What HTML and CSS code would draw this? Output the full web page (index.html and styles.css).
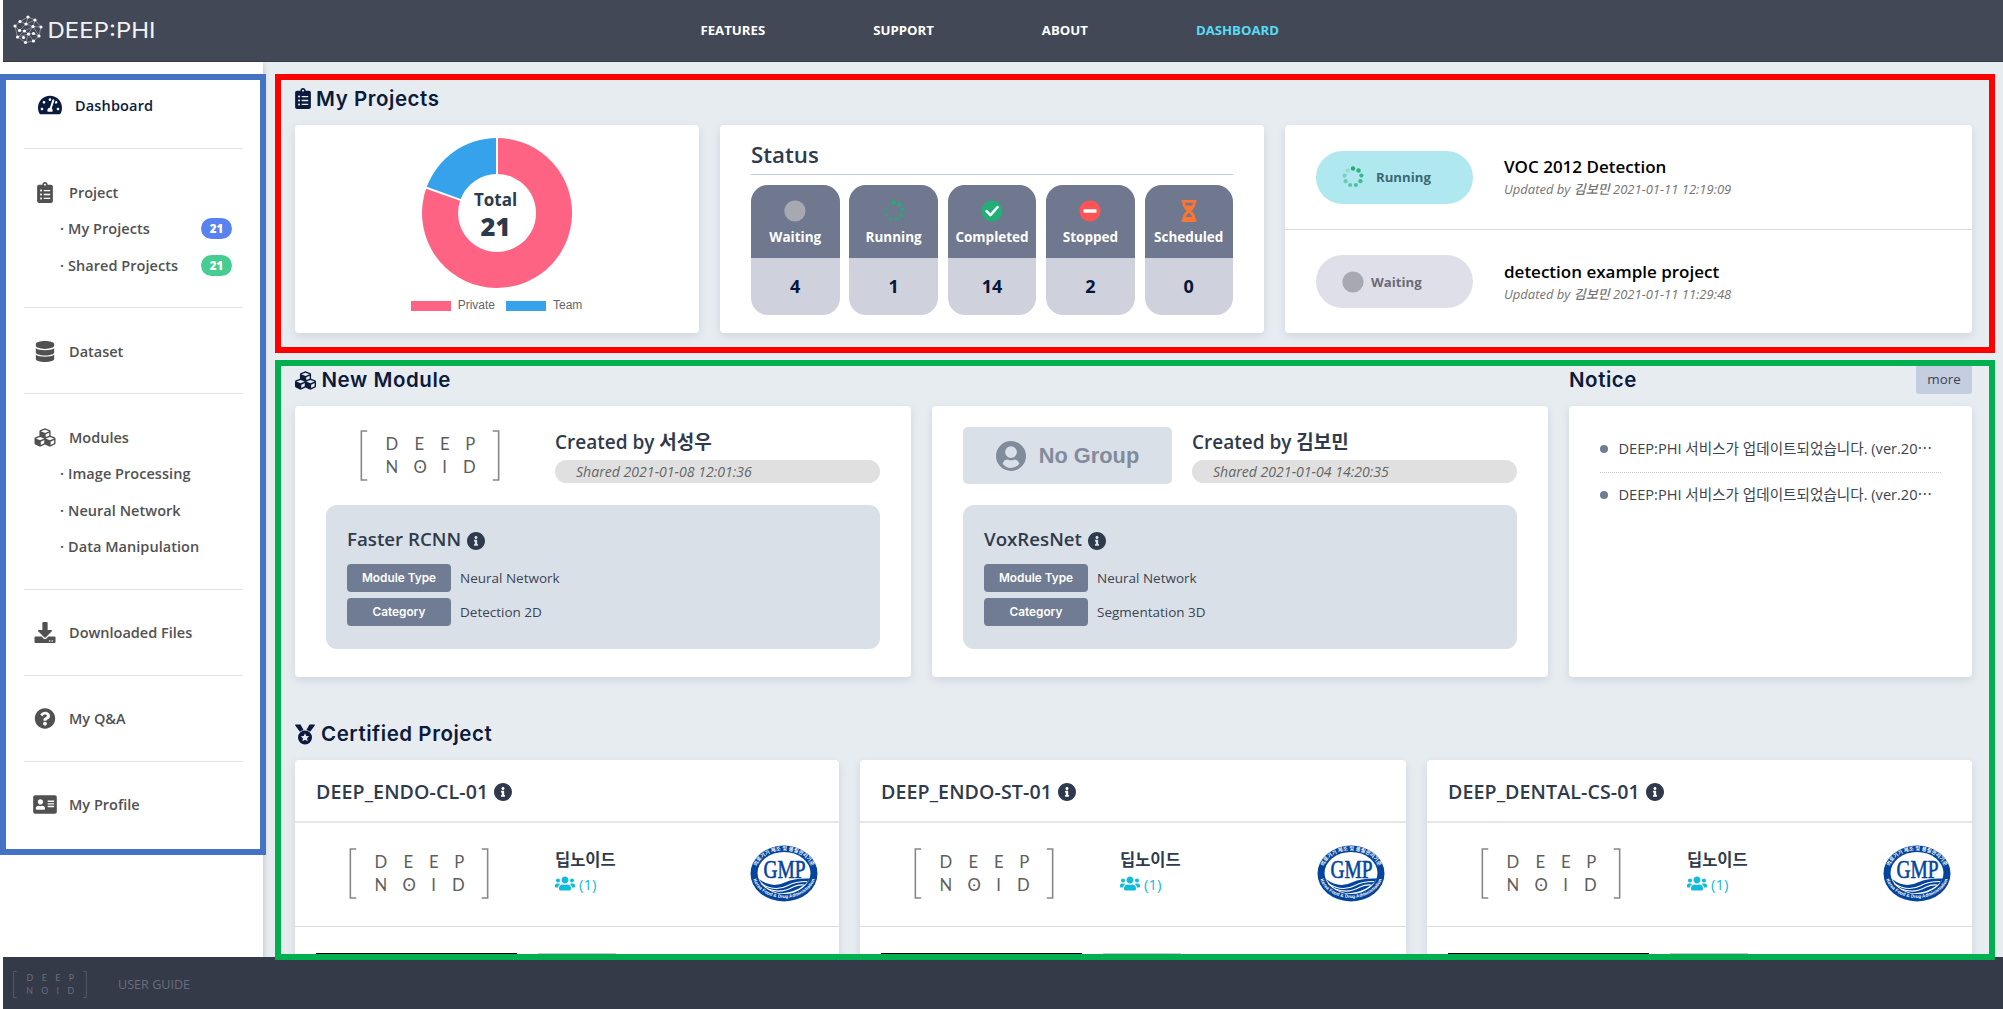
FILE: index.html
```
<!DOCTYPE html>
<html lang="ko">
<head>
<meta charset="utf-8">
<title>DEEP:PHI Dashboard</title>
<link rel="stylesheet" href="styles.css">
</head>
<body>
<svg class="sprite" aria-hidden="true">
  <symbol id="i-clip" viewBox="0 0 384 512"><path d="M336 64h-80c0-35.300-28.700-64-64-64s-64 28.700-64 64H48C21.500 64 0 85.500 0 112v352c0 26.500 21.500 48 48 48h288c26.500 0 48-21.500 48-48V112c0-26.500-21.500-48-48-48zM96 424c-13.300 0-24-10.700-24-24s10.700-24 24-24 24 10.700 24 24-10.700 24-24 24zm0-96c-13.300 0-24-10.700-24-24s10.700-24 24-24 24 10.700 24 24-10.700 24-24 24zm0-96c-13.300 0-24-10.700-24-24s10.700-24 24-24 24 10.700 24 24-10.700 24-24 24zm96-192c13.300 0 24 10.700 24 24s-10.700 24-24 24-24-10.700-24-24 10.700-24 24-24zm128 368c0 4.400-3.600 8-8 8H168c-4.400 0-8-3.600-8-8v-16c0-4.400 3.600-8 8-8h144c4.400 0 8 3.600 8 8v16zm0-96c0 4.400-3.600 8-8 8H168c-4.400 0-8-3.600-8-8v-16c0-4.400 3.600-8 8-8h144c4.400 0 8 3.600 8 8v16zm0-96c0 4.400-3.600 8-8 8H168c-4.400 0-8-3.600-8-8v-16c0-4.400 3.600-8 8-8h144c4.400 0 8 3.600 8 8v16z"/></symbol>
  <symbol id="i-dash" viewBox="0 0 576 512"><path d="M288 32C128.940 32 0 160.940 0 320c0 52.800 14.250 102.260 39.060 144.800 5.610 9.620 16.300 15.200 27.440 15.200h443c11.140 0 21.830-5.580 27.440-15.200C561.750 422.260 576 372.800 576 320c0-159.060-128.940-288-288-288zm0 64c14.710 0 26.580 10.130 30.320 23.650-1.110 2.260-2.640 4.230-3.450 6.670l-9.220 27.670c-5.130 3.490-10.970 6.010-17.640 6.010-17.670 0-32-14.330-32-32S270.330 96 288 96zM96 384c-17.670 0-32-14.330-32-32s14.330-32 32-32 32 14.330 32 32-14.330 32-32 32zm48-160c-17.670 0-32-14.330-32-32s14.330-32 32-32 32 14.330 32 32-14.330 32-32 32zm246.770-72.410l-61.330 184C343.130 347.330 352 364.540 352 384c0 11.720-3.380 22.550-8.880 32H232.880c-5.500-9.450-8.880-20.280-8.880-32 0-33.940 26.500-61.430 59.900-63.590l61.340-184.010c4.170-12.560 17.730-19.450 30.360-15.170 12.570 4.190 19.350 17.790 15.170 30.360zm14.660 57.200l15.520-46.550c3.470-1.290 7.130-2.230 11.050-2.230 17.670 0 32 14.330 32 32s-14.330 32-32 32c-11.380-.010-20.890-6.280-26.570-15.220zM480 384c-17.670 0-32-14.330-32-32s14.330-32 32-32 32 14.330 32 32-14.330 32-32 32z"/></symbol>
  <symbol id="i-db" viewBox="0 0 448 512"><path d="M448 73.143v45.714C448 159.143 347.667 192 224 192S0 159.143 0 118.857V73.143C0 32.857 100.333 0 224 0s224 32.857 224 73.143zM448 176v102.857C448 319.143 347.667 352 224 352S0 319.143 0 278.857V176c48.125 33.143 136.208 48.572 224 48.572S399.874 209.143 448 176zm0 160v102.857C448 479.143 347.667 512 224 512S0 479.143 0 438.857V336c48.125 33.143 136.208 48.572 224 48.572S399.874 369.143 448 336z"/></symbol>
  <symbol id="i-cubes" viewBox="0 0 512 512"><path d="M488.600 250.200L392 214V105.500c0-15-9.300-28.400-23.400-33.700l-100-37.500c-8.100-3.100-17.100-3.100-25.300 0l-100 37.500c-14.100 5.300-23.400 18.700-23.400 33.700V214l-96.600 36.200C9.300 255.500 0 268.900 0 283.900V394c0 13.600 7.700 26.100 19.900 32.200l100 50c10.100 5.100 22.100 5.100 32.200 0l103.900-52 103.900 52c10.100 5.100 22.100 5.100 32.200 0l100-50c12.200-6.100 19.900-18.600 19.900-32.200V283.900c0-15-9.300-28.400-23.400-33.700zM358 214.800l-85 31.900v-68.200l85-37v73.300zM154 104.100l102-38.200 102 38.200v.600l-102 41.400-102-41.400v-.600zm84 291.100l-85 42.500v-79.100l85-38.800v75.400zm0-112l-102 41.400-102-41.400v-.600l102-38.200 102 38.200v.600zm240 112l-85 42.500v-79.100l85-38.800v75.400zm0-112l-102 41.400-102-41.400v-.600l102-38.200 102 38.200v.600z"/></symbol>
  <symbol id="i-down" viewBox="0 0 512 512"><path d="M216 0h80c13.300 0 24 10.700 24 24v168h87.700c17.800 0 26.700 21.500 14.100 34.100L269.700 378.300c-7.500 7.500-19.800 7.500-27.300 0L90.100 226.100c-12.600-12.600-3.700-34.100 14.100-34.100H192V24c0-13.300 10.700-24 24-24zm296 376v112c0 13.300-10.700 24-24 24H24c-13.300 0-24-10.700-24-24V376c0-13.300 10.700-24 24-24h146.700l49 49c20.100 20.100 52.500 20.100 72.600 0l49-49H488c13.300 0 24 10.700 24 24zm-124 88c0-11-9-20-20-20s-20 9-20 20 9 20 20 20 20-9 20-20zm64 0c0-11-9-20-20-20s-20 9-20 20 9 20 20 20 20-9 20-20z"/></symbol>
  <symbol id="i-help" viewBox="0 0 512 512"><path d="M504 256c0 136.997-111.043 248-248 248S8 392.997 8 256C8 119.083 119.043 8 256 8s248 111.083 248 248zM262.655 90c-54.497 0-89.255 22.957-116.549 63.758-3.536 5.286-2.353 12.415 2.715 16.258l34.699 26.310c5.205 3.947 12.621 3.008 16.665-2.122 17.864-22.658 30.113-35.797 57.303-35.797 20.429 0 45.698 13.148 45.698 32.958 0 14.976-12.363 22.667-32.534 33.976C247.128 238.528 216 254.941 216 296v4c0 6.627 5.373 12 12 12h56c6.627 0 12-5.373 12-12v-1.333c0-28.462 83.186-29.647 83.186-106.667 0-58.002-60.165-102-116.531-102zM256 338c-25.365 0-46 20.635-46 46 0 25.364 20.635 46 46 46s46-20.636 46-46c0-25.365-20.635-46-46-46z"/></symbol>
  <symbol id="i-card" viewBox="0 0 576 512"><path d="M528 32H48C21.500 32 0 53.500 0 80v352c0 26.500 21.500 48 48 48h480c26.500 0 48-21.500 48-48V80c0-26.500-21.500-48-48-48zm-352 96c35.300 0 64 28.700 64 64s-28.700 64-64 64-64-28.700-64-64 28.700-64 64-64zm112 236.800c0 10.600-10 19.200-22.400 19.200H86.400C74 384 64 375.400 64 364.800v-19.200c0-31.800 30.100-57.600 67.200-57.600h5c12.300 5.100 25.700 8 39.800 8s27.600-2.900 39.800-8h5c37.100 0 67.200 25.800 67.200 57.600v19.200zM512 312c0 4.400-3.600 8-8 8H360c-4.400 0-8-3.600-8-8v-16c0-4.400 3.600-8 8-8h144c4.400 0 8 3.600 8 8v16zm0-64c0 4.400-3.600 8-8 8H360c-4.400 0-8-3.600-8-8v-16c0-4.400 3.600-8 8-8h144c4.400 0 8 3.600 8 8v16zm0-64c0 4.400-3.600 8-8 8H360c-4.400 0-8-3.600-8-8v-16c0-4.400 3.600-8 8-8h144c4.400 0 8 3.600 8 8v16z"/></symbol>
  <symbol id="i-info" viewBox="8 8 496 496"><path d="M256 8C119.043 8 8 119.083 8 256c0 136.997 111.043 248 248 248s248-111.003 248-248C504 119.083 392.957 8 256 8zm0 110c23.196 0 42 18.804 42 42s-18.804 42-42 42-42-18.804-42-42 18.804-42 42-42zm56 254c0 6.627-5.373 12-12 12h-88c-6.627 0-12-5.373-12-12v-24c0-6.627 5.373-12 12-12h12v-64h-12c-6.627 0-12-5.373-12-12v-24c0-6.627 5.373-12 12-12h64c6.627 0 12 5.373 12 12v100h12c6.627 0 12 5.373 12 12v24z"/></symbol>
  <symbol id="i-users" viewBox="0 32 640 448"><path d="M96 224c35.300 0 64-28.700 64-64s-28.700-64-64-64-64 28.700-64 64 28.700 64 64 64zm448 0c35.300 0 64-28.700 64-64s-28.700-64-64-64-64 28.700-64 64 28.700 64 64 64zm32 32h-64c-17.600 0-33.500 7.100-45.100 18.600 40.300 22.100 68.900 62 75.100 109.400h66c17.700 0 32-14.300 32-32v-32c0-35.300-28.700-64-64-64zm-256 0c61.900 0 112-50.100 112-112S381.900 32 320 32 208 82.100 208 144s50.100 112 112 112zm76.800 32h-8.300c-20.800 10-43.900 16-68.500 16s-47.600-6-68.500-16h-8.300C179.600 288 128 339.600 128 403.200V432c0 26.500 21.500 48 48 48h288c26.500 0 48-21.500 48-48v-28.800c0-63.600-51.600-115.200-115.200-115.200zm-223.700-13.400C161.500 263.100 145.600 256 128 256H64c-35.300 0-64 28.700-64 64v32c0 17.700 14.300 32 32 32h65.900c6.300-47.400 34.900-87.300 75.200-109.400z"/></symbol>
  <symbol id="i-medal" viewBox="0 0 20 20"><path fill-rule="evenodd" d="M.5 0H5.500L8.600 5.400Q6.300 6 4.900 7.200L.2 .9Q0 0 .5 0zM19.500 0H14.500L11.400 5.400Q13.700 6 15.100 7.200L19.800 .9Q20 0 19.500 0zM10 6a7 7 0 1 0 0 14a7 7 0 1 0 0-14zM10 8.800l1.300 2.600 2.900.4-2.100 2 .5 2.900-2.600-1.400-2.600 1.400.5-2.900-2.100-2 2.900-.4z"/></symbol>
  <symbol id="i-spin" viewBox="0 0 22 22"><g fill="#23ae76"><circle cx="11" cy="2.500" r="2.200"/><circle cx="16.500" cy="4.500" r="2.200" opacity=".95"/><circle cx="19.400" cy="9.500" r="2.100" opacity=".85"/><circle cx="18.400" cy="15.200" r="2.100" opacity=".78"/><circle cx="13.900" cy="19" r="2.100" opacity=".7"/><circle cx="8.100" cy="19" r="2.100" opacity=".6"/><circle cx="3.600" cy="15.200" r="2.100" opacity=".5"/><circle cx="2.600" cy="9.500" r="2.100" opacity=".38"/><circle cx="5.500" cy="4.500" r="2.100" opacity=".22"/></g></symbol>
  <symbol id="i-dot" viewBox="0 0 22 22"><circle cx="11" cy="11" r="10.600" fill="#a7a8b1"/></symbol>
  <symbol id="i-check" viewBox="0 0 22 22"><circle cx="11" cy="11" r="10.600" fill="#23ae76"/><path d="M5.600 11.200l3.800 3.900 7.200-7.900" fill="none" stroke="#fff" stroke-width="2.600" stroke-linecap="round" stroke-linejoin="round"/></symbol>
  <symbol id="i-stop" viewBox="0 0 22 22"><circle cx="11" cy="11" r="10.600" fill="#ff5456"/><rect x="4.500" y="9.200" width="13" height="3.600" rx=".5" fill="#fff"/></symbol>
  <symbol id="i-hour" viewBox="0 0 16 22"><path fill="#fd7532" fill-rule="evenodd" d="M.6 0H15.400V2.600H14.600Q14.300 8 10.400 11Q14.300 14 14.600 19.400H15.400V22H.6V19.400H1.400Q1.700 14 5.600 11Q1.700 8 1.400 2.600H.6zM4 2.800Q4.100 4.300 4.700 5.400H11.300Q11.900 4.300 12 2.800zM4.800 17H11.200Q10.300 14 8 12.900Q5.700 14 4.800 17z"/></symbol>
  <symbol id="i-user" viewBox="0 0 30 30"><path fill-rule="evenodd" d="M15 0a15 15 0 1 0 0 30a15 15 0 1 0 0-30zM15 5.200a5.600 5.600 0 0 1 0 11.800a5.600 5.600 0 0 1 0-11.800zM6.600 22.800Q8 18.600 11.500 18.500Q15 20.200 18.500 18.500Q22 18.600 23.400 22.800Q20 27 15 27Q10 27 6.600 22.800z"/></symbol>
  <symbol id="i-deepnoid" viewBox="0 0 142 52">
    <path d="M7 1H1v50h6M135 1h6v50h-6" fill="none" stroke="currentColor" stroke-width="1.600" opacity=".75"/>
    <g font-family="Lato" font-size="17" text-anchor="middle" fill="currentColor"><text x="32" y="20">D</text><text x="60" y="20">E</text><text x="86" y="20">E</text><text x="112" y="20">P</text><text x="32" y="44">N</text><text x="61" y="44">O</text><text x="86" y="44">I</text><text x="111" y="44">D</text></g><circle cx="61" cy="38" r="1.100" fill="currentColor"/>
  </symbol>
  <symbol id="i-gmp" viewBox="0 0 68 57">
    <ellipse cx="34" cy="28.500" rx="33.500" ry="28" fill="#04449c"/>
    <ellipse cx="34" cy="28" rx="26.500" ry="21" fill="#fff"/>
    <path d="M9 34Q22 44 36 37Q44 33 60 33.500Q57 39 49 43.500Q38 49 28 48Q16 45 9 34z" fill="#04449c"/>
    <path d="M11 38.500Q25 47.500 38 40.500Q45 36.500 57 36.500M18 44Q31 49 43 42Q48 39.500 54 40" fill="none" stroke="#fff" stroke-width="1.100"/>
    <text x="34.500" y="32.500" font-family="Liberation Serif" font-size="25" textLength="42" lengthAdjust="spacingAndGlyphs" text-anchor="middle" fill="#04449c" stroke="#04449c" stroke-width=".6">GMP</text>
    <path id="arc-top" d="M5.500 25A28.800 23 0 0 1 62.500 25" fill="none"/>
    <path id="arc-bottom" d="M2.500 32A32 25.500 0 0 0 65.500 32" fill="none"/>
    <g fill="#fff" text-anchor="middle"><text font-family="Noto Sans CJK KR" font-weight="700" font-size="5.200"><textPath href="#arc-top" startOffset="50%">의료기기 제조 및 품질관리기준</textPath></text>
    <text font-family="Liberation Sans" font-weight="700" font-size="4.600"><textPath href="#arc-bottom" startOffset="50%">Korea Food &amp; Drug Administration</textPath></text></g>
  </symbol>
</svg>

<div class="page">
  <header class="topbar">
    <svg class="brand" viewBox="0 0 150 34">
      <g stroke="#fff" stroke-width=".6" opacity=".6" fill="none"><path d="M7 7.500L15 3L22 6L28 13L26 22L20.500 27L12.500 28.500L4.500 23L2 12zM7 7.500L13 10L22 6M15 3L13 10L20 12.500L28 13M2 12L6.500 16.500L13 10M6.500 16.500L11.500 17L20 12.500L26 22M11.500 17L4.500 23L15.500 20L20 12.500M11.500 17L15.500 20L20.500 27M15.500 20L20.500 19.500L26 22M12.500 28.500L15.500 20M22 6L20 12.500"/></g>
      <g fill="#fff"><circle cx="7" cy="7.500" r="1.600"/><circle cx="15" cy="3" r="1.600"/><circle cx="22" cy="6" r="1.600"/><circle cx="28" cy="13" r="1.600"/><circle cx="26" cy="22" r="1.600"/><circle cx="20.500" cy="27" r="1.600"/><circle cx="12.500" cy="28.500" r="1.600"/><circle cx="4.500" cy="23" r="1.600"/><circle cx="2" cy="12" r="1.600"/><circle cx="13" cy="10" r="1.600"/><circle cx="20" cy="12.500" r="1.600"/><circle cx="6.500" cy="16.500" r="1.600"/><circle cx="11.500" cy="17" r="1.600"/><circle cx="15.500" cy="20" r="1.600"/><circle cx="20.500" cy="19.500" r="1.600"/><circle cx="10.500" cy="23.500" r="1.600"/></g>
      <text x="34.500" y="24" font-family="Inter" font-weight="400" font-size="21.500" fill="#f2f3f5" textLength="108" lengthAdjust="spacingAndGlyphs">DEEP:PHI</text>
    </svg>
    <nav class="nav"><a>FEATURES</a><a>SUPPORT</a><a>ABOUT</a><a class="on">DASHBOARD</a></nav>
  </header>

  <div class="body">
    <aside class="side">
      <section class="first"><div class="row active"><svg class="ic dash"><use href="#i-dash"/></svg>Dashboard</div></section>
      <section>
        <div class="row"><svg class="ic"><use href="#i-clip"/></svg>Project</div>
        <div class="row sub"><span>My Projects</span><b class="badge blue">21</b></div>
        <div class="row sub"><span>Shared Projects</span><b class="badge green">21</b></div>
      </section>
      <section><div class="row"><svg class="ic"><use href="#i-db"/></svg>Dataset</div></section>
      <section>
        <div class="row"><svg class="ic"><use href="#i-cubes"/></svg>Modules</div>
        <div class="row sub"><span>Image Processing</span></div>
        <div class="row sub"><span>Neural Network</span></div>
        <div class="row sub"><span>Data Manipulation</span></div>
      </section>
      <section><div class="row"><svg class="ic"><use href="#i-down"/></svg>Downloaded Files</div></section>
      <section><div class="row"><svg class="ic"><use href="#i-help"/></svg>My Q&amp;A</div></section>
      <section><div class="row"><svg class="ic"><use href="#i-card"/></svg>My Profile</div></section>
    </aside>

    <main class="main">
      <h2 class="h first"><svg class="clip"><use href="#i-clip"/></svg>My Projects</h2>
      <div class="grid projects">
        <div class="card chart">
          <svg width="152" height="152" viewBox="-76 -76 152 152">
            <path d="M0-75A75 75 0 1 1-70.600-25.200L-36.700-13.100A39 39 0 1 0 0-39z" fill="#ff6384"/>
            <path d="M-70.600-25.200A75 75 0 0 1 0-75V-39A39 39 0 0 0-36.700-13.100z" fill="#36a2eb"/>
            <path d="M0-76V-38M-72-25.700L-36-12.900" stroke="#fff" stroke-width="2"/>
            <text class="total" x="-1.500" y="-7.500">Total</text><text class="num" x="-1.500" y="22.500">21</text>
          </svg>
          <div class="legend"><i class="pink"></i>Private<i class="sky"></i>Team</div>
        </div>
        <div class="card status">
          <h3>Status</h3>
          <div class="tiles">
            <div class="tile"><div><svg><use href="#i-dot"/></svg>Waiting</div><b>4</b></div>
            <div class="tile"><div><svg><use href="#i-spin"/></svg>Running</div><b>1</b></div>
            <div class="tile"><div><svg><use href="#i-check"/></svg>Completed</div><b>14</b></div>
            <div class="tile"><div><svg><use href="#i-stop"/></svg>Stopped</div><b>2</b></div>
            <div class="tile"><div><svg><use href="#i-hour"/></svg>Scheduled</div><b>0</b></div>
          </div>
        </div>
        <div class="card recent">
          <div class="job"><div class="pill run"><svg><use href="#i-spin"/></svg>Running</div><div><h4>VOC 2012 Detection</h4><p>Updated by <b>김보민</b> 2021-01-11 12:19:09</p></div></div>
          <div class="job"><div class="pill wait"><svg><use href="#i-dot"/></svg>Waiting</div><div><h4>detection example project</h4><p>Updated by <b>김보민</b> 2021-01-11 11:29:48</p></div></div>
        </div>
      </div>

      <div class="grid modules-head">
        <h2 class="h"><svg class="cubes"><use href="#i-cubes"/></svg>New Module</h2>
        <div class="notice-head"><h2 class="h">Notice</h2><a class="more">more</a></div>
      </div>
      <div class="grid modules">
        <div class="card module">
          <div class="who"><div class="group"><svg class="dn"><use href="#i-deepnoid"/></svg></div><div class="by"><h4>Created by 서성우</h4><p>Shared 2021-01-08 12:01:36</p></div></div>
          <div class="info"><h3>Faster RCNN<svg><use href="#i-info"/></svg></h3>
            <div class="kv"><b>Module Type</b>Neural Network</div><div class="kv"><b>Category</b>Detection 2D</div></div>
        </div>
        <div class="card module">
          <div class="who"><div class="group none"><svg><use href="#i-user"/></svg>No Group</div><div class="by"><h4>Created by 김보민</h4><p>Shared 2021-01-04 14:20:35</p></div></div>
          <div class="info"><h3>VoxResNet<svg><use href="#i-info"/></svg></h3>
            <div class="kv"><b>Module Type</b>Neural Network</div><div class="kv"><b>Category</b>Segmentation 3D</div></div>
        </div>
        <ul class="card notice"><li><span>DEEP:PHI 서비스가 업데이트되었습니다. (ver.20⋯</span></li><li><span>DEEP:PHI 서비스가 업데이트되었습니다. (ver.20⋯</span></li></ul>
      </div>

      <h2 class="h cert-head"><svg class="medal"><use href="#i-medal"/></svg>Certified Project</h2>
      <div class="grid certs">
        <div class="card cert"><h3>DEEP_ENDO-CL-01<svg><use href="#i-info"/></svg></h3>
          <div class="org"><svg class="dn"><use href="#i-deepnoid"/></svg><div><h4>딥노이드</h4><p><svg><use href="#i-users"/></svg>(1)</p></div><svg class="gmp"><use href="#i-gmp"/></svg></div>
          <div class="media"><i></i><i></i></div></div>
        <div class="card cert"><h3>DEEP_ENDO-ST-01<svg><use href="#i-info"/></svg></h3>
          <div class="org"><svg class="dn"><use href="#i-deepnoid"/></svg><div><h4>딥노이드</h4><p><svg><use href="#i-users"/></svg>(1)</p></div><svg class="gmp"><use href="#i-gmp"/></svg></div>
          <div class="media"><i></i><i></i></div></div>
        <div class="card cert"><h3>DEEP_DENTAL-CS-01<svg><use href="#i-info"/></svg></h3>
          <div class="org"><svg class="dn"><use href="#i-deepnoid"/></svg><div><h4>딥노이드</h4><p><svg><use href="#i-users"/></svg>(1)</p></div><svg class="gmp"><use href="#i-gmp"/></svg></div>
          <div class="media"><i></i><i></i></div></div>
      </div>
    </main>
  </div>

  <footer class="foot"><svg class="dn"><use href="#i-deepnoid"/></svg><a>USER GUIDE</a></footer>
</div>

<div class="frame f-blue"></div>
<div class="frame f-red"></div>
<div class="frame f-green"></div>
</body>
</html>
```
FILE: styles.css
```
* { box-sizing: border-box; margin: 0; padding: 0; }
body {
  position: relative;
  width: 2003px;
  height: 1009px;
  overflow: hidden;
  background: #fff;
  color: #2f3b4c;
  font-family: "Open Sans", "Noto Sans CJK KR", sans-serif;
}
svg { flex: none; display: block; fill: currentColor; }
.sprite { display: none; }
.page { margin-left: 3px; height: 1009px; display: flex; flex-direction: column; }

.topbar { flex: none; height: 62px; display: flex; align-items: center; background: #434857; border-bottom: 1px solid #343948; }
.brand { width: 150px; height: 34px; margin: 0 0 0 10px; }
.nav { display: flex; margin-left: 537.500px; gap: 108px; font-size: 13.200px; font-weight: 700; line-height: 20px; color: #fff; padding-bottom: 1px; }
.nav .on { color: #58dcf5; }

.body { flex: none; height: 895px; display: flex; }
.side { position: relative; width: 260px; padding: 0 20px 0 21px; font-size: 14.500px; font-weight: 600; color: #515151; box-shadow: 0 2px 6px rgba(0,0,0,.22); clip-path: inset(0 -10px 0 0); background: #fff; }
.side section { padding: 24.800px 0 23.900px; border-bottom: 1px solid #e4e4e4; }
.side section:last-child { border: 0; }
.side .first { padding: 25px 0; }
.side .row { display: flex; align-items: center; height: 36.400px; padding-left: 8.500px; }
.ic { width: 24px; height: 21px; margin-right: 12.500px; }
.ic.dash { width: 24px; height: 22px; }
.side .active { color: #081b3e; padding-left: 14px; letter-spacing: .15px; }
.row.active .ic { margin-right: 13px; }
.side .sub { padding-left: 36px; padding-right: 11px; justify-content: space-between; letter-spacing: .04px; }
.sub span::before { content: "·"; margin-right: 4px; }
.badge { width: 31px; height: 21px; border-radius: 11px; color: #fff; font-size: 11.500px; line-height: 21px; text-align: center; }
.badge.blue { background: #5883ee; }
.badge.green { background: #46cd92; }

.main { flex: 1; background: #e7ecf1; padding: 0 31px 0 32px; overflow: hidden; }
.h { display: flex; align-items: center; height: 28px; font: 600 20.500px/28px Inter, sans-serif; letter-spacing: .55px; color: #0c1a3b; }
.h.first { margin: 23px 0 12px; }
.clip { width: 16px; height: 21px; margin: -2px 5px 0 0; }
.cubes { width: 21px; height: 21px; margin-right: 5.500px; }
.medal { width: 20px; height: 21px; margin-right: 6px; }
.grid { display: grid; }
.card { background: #fff; border-radius: 4px; box-shadow: 0 3px 9px rgba(40,60,85,.13); }
.projects { grid-template-columns: 404px 544px 687px; gap: 21px; height: 208px; }

.chart { display: flex; flex-direction: column; align-items: center; padding-top: 11.500px; }
.chart text { text-anchor: middle; fill: #2c3a4b; font-weight: 700; }
.total { font-size: 17px; }
.chart .num { font-size: 25.500px; font-weight: 800; }
.legend { display: flex; align-items: center; margin: 8.500px 1px 0 0; height: 16px; font: 12px "Liberation Sans", sans-serif; color: #666; }
.legend i { width: 40px; height: 10px; margin: 1px 7px 0 11px; }
.legend i:first-child { margin-left: 0; }
.pink { background: #ff6384; }
.sky { background: #36a2eb; }

.status { padding: 12px 31px 0; }
.status h3 { height: 38px; border-bottom: 1px solid #bfcbdf; font-size: 22.300px; font-weight: 600; line-height: 36px; }
.tiles { display: flex; justify-content: space-between; margin-top: 10px; }
.tile { width: 88.500px; height: 130px; border-radius: 17px; overflow: hidden; background: #cfd1dd; color: #06163a; text-align: center; }
.tile div { height: 73px; padding-top: 15px; background: #6f788e; color: #fff; font-size: 13.500px; font-weight: 700; line-height: 20px; }
.tile svg { width: 22px; height: 22px; margin: 0 auto 5px; }
.tile b { font-size: 18px; line-height: 57px; }

.recent { display: grid; grid-template-rows: 104px 104px; }
.job { display: flex; align-items: center; padding-left: 31px; }
.job + .job { border-top: 1px solid #dadbdf; }
.pill { display: flex; align-items: center; width: 157px; height: 53px; border-radius: 27px; padding-left: 26px; margin-right: 31px; font-size: 13.200px; font-weight: 700; }
.pill svg { width: 22px; height: 22px; }
.run { background: #afe8ee; color: #3b6873; }
.run svg { margin-right: 12px; }
.wait { background: #dfdfe9; color: #6b6b72; }
.wait svg { margin-right: 7px; }
.job h4 { font-size: 17px; font-weight: 600; line-height: 24px; color: #000; }
.job p { font-size: 13px; font-style: italic; line-height: 20px; color: #747474; }
.job p b { font-weight: 500; }

.modules-head { grid-template-columns: 1253px 403px; gap: 21px; margin-top: 32px; }
.modules-head .h { margin-top: 1px; }
.notice-head { display: flex; justify-content: space-between; height: 41px; }
.more { width: 56px; height: 29px; background: #c5cde0; border-radius: 3px; font-size: 13.400px; line-height: 29px; text-align: center; color: #3c4450; }
.modules { grid-template-columns: 616px 616px 403px; gap: 21px; height: 271px; }
.module { padding: 21px 31px 0; }
.who { display: flex; height: 57px; gap: 20px; }
.group { flex: none; width: 209px; display: flex; align-items: center; justify-content: center; color: #5e5e5e; }
.group .dn { width: 142px; height: 51px; margin-left: -1px; }
.none { background: #dae0e8; border-radius: 5px; gap: 13px; color: #828b9b; font: 700 21.800px "Liberation Sans", sans-serif; }
.none svg { width: 30px; height: 30px; }
.by { flex: 1; }
.by h4 { font-size: 19px; font-weight: 600; line-height: 28px; margin: 1px 0 4px; }
.by p { height: 23px; border-radius: 12px; background: #e0e0e0; padding-left: 21px; font-size: 14.100px; font-style: italic; line-height: 23px; color: #666; }
.info { height: 144px; margin-top: 21px; padding: 19px 21px 0; background: #dae0e8; border-radius: 11px; }
.info h3, .cert h3 { display: flex; align-items: center; font-size: 18.700px; font-weight: 600; line-height: 30px; }
.info svg { width: 18px; height: 18px; margin: 3px 0 0 6px; }
.info h3 { margin-bottom: 9.500px; height: 30px; }
.kv { display: flex; align-items: center; gap: 9px; height: 28px; margin-bottom: 6px; font-size: 13.500px; color: #3c4450; }
.kv b { width: 104px; height: 28px; border-radius: 4px; background: #6f7c94; color: #fff; font: 600 11.800px/28px Inter, sans-serif; text-align: center; }
.notice { list-style: none; padding: 20.500px 31px; }
.notice li { display: flex; align-items: center; height: 45.500px; font-size: 14.600px; line-height: 22px; color: #3c4450; white-space: nowrap; }
.notice li span { padding-bottom: 2px; }
.notice li::before { content: ""; width: 8px; height: 8px; border-radius: 50%; background: #6f7c94; margin-right: 10.500px; }
.notice li + li { border-top: 1px dotted #c4c4c4; }

.cert-head { margin: 43px 0 12px; }
.certs { grid-template-columns: 544px 546px 545px; gap: 21px; height: 240px; }
.cert h3 { height: 63px; border-bottom: 2px solid #e6e6e6; padding: 3px 0 0 21px; font-size: 19.600px; letter-spacing: .1px; }
.cert h3 svg { width: 18px; height: 18px; margin-left: 6px; }
.org { display: flex; align-items: center; height: 104px; border-bottom: 1px solid #dcdcdc; padding: 0 21px 2px 53px; }
.org .dn { width: 142px; height: 51px; color: #5e5e5e; margin: 0 65px 0 0; }
.org h4 { font-size: 16.500px; font-weight: 600; line-height: 24px; margin-top: -4px; }
.org p { display: flex; align-items: center; gap: 4px; font-size: 15px; line-height: 24px; color: #10bbdc; }
.org p svg { width: 20px; height: 15px; }
.gmp { width: 68px; height: 57px; margin: 0 0 0 auto; }
.media { display: flex; gap: 21px; padding: 26px 0 0 21px; }
.media i { width: 201px; height: 50px; background: #000; }
.media i + i { width: 78px; background: #c4c8cc; }

.foot { flex: none; height: 52px; display: flex; align-items: center; gap: 31px; padding: 3px 0 0 10px; background: #353a48; color: #686e7e; font-size: 12.600px; }
.foot .dn { width: 74px; height: 27px; }

.frame { position: absolute; border: 6px solid; }
.f-blue { left: 0; top: 74px; width: 266px; height: 781px; border-color: #4472c4; }
.f-red { left: 275px; top: 74px; width: 1720px; height: 279px; border-color: #f00; }
.f-green { left: 275px; top: 360px; width: 1720px; height: 600px; border-color: #00b050; }
```
